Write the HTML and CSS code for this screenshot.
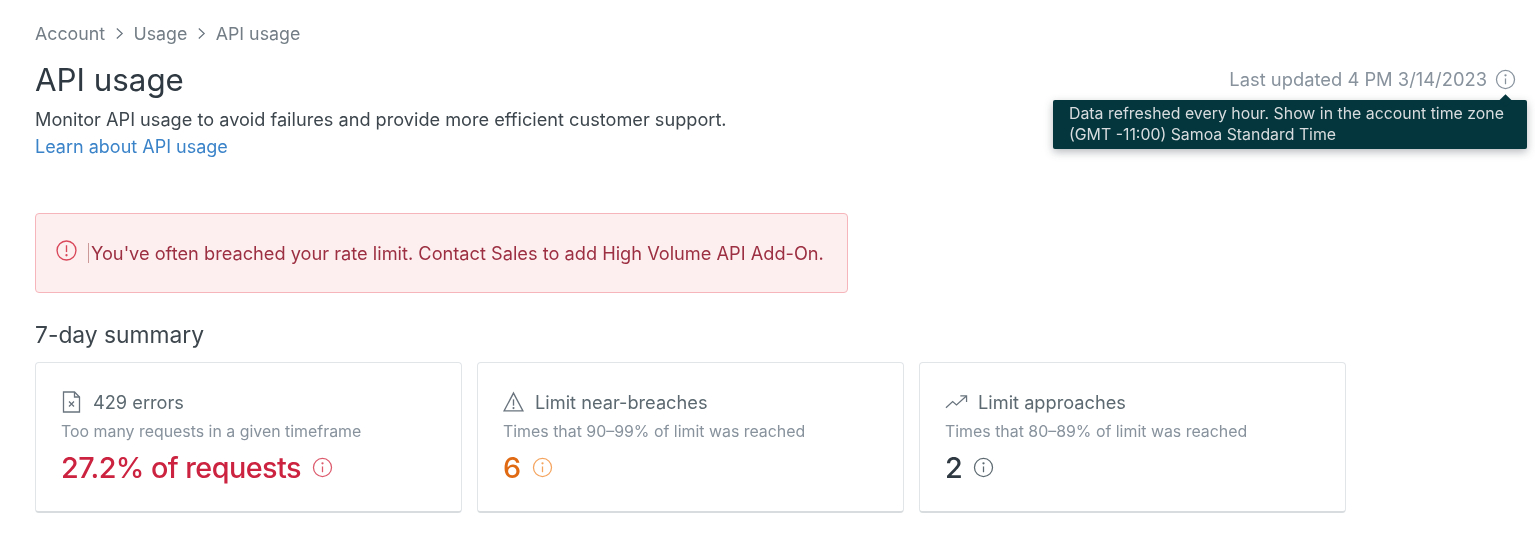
FILE: index.html
```html
<!DOCTYPE html>
<html lang="en">
<head>
<meta charset="utf-8">
<title>API usage</title>
<link rel="stylesheet" href="styles.css">
</head>
<body>
<main class="page">
  <nav class="crumbs">
    <span>Account</span>
    <svg class="chev" viewBox="0 0 10 14"><path d="M2 1.500 8 7l-6 5.500"/></svg>
    <span>Usage</span>
    <svg class="chev" viewBox="0 0 10 14"><path d="M2 1.500 8 7l-6 5.500"/></svg>
    <span>API usage</span>
  </nav>
  <header class="head">
    <div class="head-text">
      <h1>API usage</h1>
      <p class="lead">Monitor API usage to avoid failures and provide more efficient customer support.</p>
      <a class="learn" href="#">Learn about API usage</a>
    </div>
    <div class="updated">
      <span>Last updated 4 PM 3/14/2023</span>
      <svg class="info info-updated" viewBox="0 0 20 20"><circle cx="10" cy="10" r="8.600"/><path d="M10 9v5.500"/><circle class="dot" cx="10" cy="6" r="1.100"/></svg>
      <div class="tooltip">Data refreshed every hour. Show in the account time zone<br>(GMT -11:00) Samoa Standard Time</div>
    </div>
  </header>
  <div class="alert">
    <svg class="alert-icon" viewBox="0 0 20 20"><circle cx="10" cy="10" r="9"/><path d="M10 5v6.500"/><circle class="dot" cx="10" cy="14.500" r="1.100"/></svg>
    <span class="alert-text">You've often breached your rate limit. Contact Sales to add High Volume API Add-On.</span>
  </div>
  <h2>7-day summary</h2>
  <section class="cards">
    <article class="card">
      <div class="card-title">
        <svg class="icon" viewBox="0 0 20 22"><path d="M2 1h11l5 5v15H2z"/><path d="M13 1v5h5"/><path d="m7.500 10.500 5 5m0-5-5 5"/></svg>
        <span>429 errors</span>
      </div>
      <p class="card-sub">Too many requests in a given timeframe</p>
      <div class="metric red"><span>27.2% of requests</span>
        <svg class="info" viewBox="0 0 20 20"><circle cx="10" cy="10" r="8.600"/><path d="M10 9v5.500"/><circle class="dot" cx="10" cy="6" r="1.100"/></svg>
      </div>
    </article>
    <article class="card">
      <div class="card-title">
        <svg class="icon" viewBox="0 0 20 20"><path d="M10 1.500 19 18.500H1z"/><path d="M10 7.500v6"/><circle class="dot" cx="10" cy="15.800" r="1"/></svg>
        <span>Limit near-breaches</span>
      </div>
      <p class="card-sub">Times that 90–99% of limit was reached</p>
      <div class="metric orange"><span>6</span>
        <svg class="info" viewBox="0 0 20 20"><circle cx="10" cy="10" r="8.600"/><path d="M10 9v5.500"/><circle class="dot" cx="10" cy="6" r="1.100"/></svg>
      </div>
    </article>
    <article class="card">
      <div class="card-title">
        <svg class="icon icon-trend" viewBox="0 0 24 16"><path d="m1 14 7-6.500 4 3.500 10-9"/><path d="M16 1.500h6.500V8"/></svg>
        <span>Limit approaches</span>
      </div>
      <p class="card-sub">Times that 80–89% of limit was reached</p>
      <div class="metric dark"><span>2</span>
        <svg class="info" viewBox="0 0 20 20"><circle cx="10" cy="10" r="8.600"/><path d="M10 9v5.500"/><circle class="dot" cx="10" cy="6" r="1.100"/></svg>
      </div>
    </article>
  </section>
</main>
</body>
</html>
```
FILE: styles.css
```css
* { box-sizing: border-box; }
html, body { margin: 0; background: #fff; }
body { font-family: Inter, "Liberation Sans", sans-serif; color: #2f3941; overflow: hidden; }
.page { padding: 21px 19px 0 35px; height: 549px; filter: blur(.45px); }
.crumbs { display: flex; align-items: center; gap: 9.700px; height: 24px; font-size: 17.800px; color: #737d85; }
.chev { width: 9px; height: 13px; fill: none; stroke: #68737d; stroke-width: 1.300; }
.head { display: flex; justify-content: space-between; align-items: flex-start; margin-top: 13px; }
h1 { margin: 0; font-size: 31.300px; line-height: 44px; font-weight: 400; color: #2f3941; }
.lead { margin: 4px 0 0; font-size: 18.170px; line-height: 26px; color: #3d464d; }
.learn { display: block; margin-top: 1px; font-size: 18px; line-height: 28px; color: #3a83c9; text-decoration: none; }
.updated { position: relative; display: flex; align-items: center; gap: 8px; height: 42px; font-size: 18.350px; color: #87929d; }
.info { width: 21px; height: 21px; fill: none; stroke: currentColor; stroke-width: 1.200; }
.info .dot, .dot { fill: currentColor; stroke: none; }
.tooltip { position: absolute; top: 42px; right: -11px; width: 474px; padding: 3px 16px 4px; background: #03363d; color: #d8dcde; font-size: 15.870px; line-height: 21px; border-radius: 2px; box-shadow: 0 3px 8px rgba(47,57,65,.35); white-space: nowrap; }
.tooltip::before { content: ""; position: absolute; top: -4px; right: 17px; width: 9px; height: 9px; background: #03363d; transform: rotate(45deg); }
.alert { display: flex; align-items: center; gap: 11px; width: 813px; height: 80px; margin-top: 52px; padding: 0 0 0 20px; background: #fdeff0; border: 1px solid #f5b5ba; border-radius: 4px; font-size: 18.220px; color: #9c2f41; }
.alert-icon { width: 21px; height: 21px; margin-top: -5px; flex: none; fill: none; stroke: #d9485a; stroke-width: 1.300; color: #d9485a; }
.alert-text { border-left: 1px solid #c99; line-height: 20px; padding-left: 2px; }
h2 { margin: 27px 0 0; font-size: 22.800px; line-height: 30px; font-weight: 400; color: #3d464d; }
.cards { display: flex; gap: 15.500px; margin-top: 12px; }
.card { width: 426.500px; height: 151px; padding: 27px 25px 0; background: #fff; border: 1px solid #e2e5e8; border-bottom: 2px solid #d8dcde; border-radius: 4px; }
.card-title { display: flex; align-items: center; gap: 11px; height: 24px; font-size: 18.200px; color: #5c6970; }
.icon { width: 21px; height: 22px; flex: none; fill: none; stroke: #68737d; stroke-width: 1.300; color: #68737d; }
.icon-trend { width: 23px; height: 16px; }
.card-title .icon-trend { margin-right: -1px; }
.card-sub { margin: 8px 0 0; font-size: 15.900px; line-height: 20px; color: #87929d; }
.metric { display: flex; align-items: center; gap: 11px; margin-top: 7px; height: 36px; font-size: 28.800px; letter-spacing: -.56px; font-weight: 500; }
.red { color: #cc2340; }
.orange { color: #e06a14; }
.dark { color: #2f3941; }
.red .info { color: #dc5a6c; }
.orange .info { color: #f5a45f; }
.dark .info { color: #5c6970; }
```
